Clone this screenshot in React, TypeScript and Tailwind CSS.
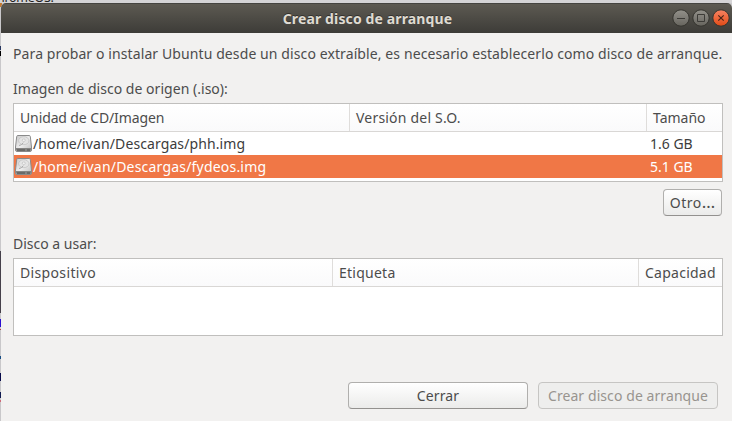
import React from "react";

function DiskIcon() {
  return (
    <svg className="block h-[17px] w-[17px] shrink-0" viewBox="0 0 17 17">
      <defs>
        <linearGradient id="disk-top" x1="0" y1="0" x2="1" y2="1">
          <stop offset="0" stopColor="#c9c9c9" />
          <stop offset="0.5" stopColor="#ededed" />
          <stop offset="1" stopColor="#bcbcbc" />
        </linearGradient>
      </defs>
      <path d="M2.8.5h11.4q1 0 1.1 1l1.2 10.5v3q0 1.5-1.5 1.5h-13Q.5 16.5.5 15v-3L1.7 1.5q.1-1 1.1-1z" fill="url(#disk-top)" stroke="#8a8a8a" />
      <path d="M1 13h15v1.8q0 1.2-1.2 1.2H2.200Q1 16 1 14.800z" fill="#858583" />
      <path d="M2 15h8M12 15h3" stroke="#50504e" />
      <ellipse cx="8.8" cy="5.7" rx="5.2" ry="4" fill="#e4e4e4" stroke="#c2c2c2" strokeWidth=".8" />
      <ellipse cx="8.8" cy="5.2" rx="1.6" ry="1.2" fill="#f8f8f8" stroke="#b4b4b4" strokeWidth=".6" />
      <path d="M4 10.500q2.500 0 4.300-2.800" fill="none" stroke="#aaa" />
    </svg>
  );
}

function WindowButton({ kind }: { kind: "min" | "max" | "close" }) {
  const close = kind === "close";
  return (
    <svg className="block h-[18px] w-[18px]" viewBox="0 0 18 18">
      <defs>
        <linearGradient id={"control-" + kind} x1="0" y1="0" x2="0" y2="1">
          <stop offset="0" stopColor={close ? "#f58363" : "#93918a"} />
          <stop offset="0.5" stopColor={close ? "#ee673c" : "#7d7b75"} />
          <stop offset="1" stopColor={close ? "#df4a16" : "#66645d"} />
        </linearGradient>
      </defs>
      <circle cx="9" cy="9" r="8.2" fill={"url(#control-" + kind + ")"} stroke="#35342f" strokeWidth="1" />
      {kind === "min" && <path d="M5 9.5h8" stroke="#3c3b37" />}
      {kind === "max" && <path d="M5.5 5.5h7v7h-7z" fill="none" stroke="#3c3b37" />}
      {close && <path d="m6.3 6.3 5.4 5.4m0-5.4-5.4 5.4" stroke="#4a2518" strokeWidth="1.2" />}
    </svg>
  );
}

const headBg = "bg-gradient-to-b from-white to-[#fafafb]";

export default function App() {
  return (
    <div className="relative h-[421px] w-[732px] overflow-hidden bg-[#c9c8ca] pl-px pt-[3px] font-['Noto_Sans',sans-serif] text-[14px] text-[#4c4c4c]">
      <div className="absolute left-0 top-0 h-[3px] w-full overflow-hidden bg-[#d5d4d6]">
        <span className="absolute -left-[3px] -top-[11px] whitespace-nowrap text-[12.5px] leading-[18px] tracking-[-0.3px] text-[#222]">hromeOS:</span>
      </div>
      <div className="absolute left-0 top-[3px] h-[4px] w-[2px] bg-[#c77b32]" />
      <div className="absolute left-0 top-[46px] h-[4px] w-px bg-[#26355f]" />
      <div className="absolute left-0 top-[51px] h-[5px] w-px bg-black" />
      <div className="absolute left-0 top-[251px] h-[62px] w-px bg-[#45404a]" />
      <div className="absolute left-0 top-[319px] h-[8px] w-px bg-[#2a0fd0]" />
      <div className="absolute left-0 top-[329px] h-px w-px bg-[#b83c4c]" />
      <div className="absolute left-0 top-[356px] h-[3px] w-px bg-[#174d85]" />
      <div className="absolute left-0 top-[373px] h-[8px] w-px bg-[#070a4a]" />
      <div className="absolute left-0 top-[392px] h-[6px] w-px bg-[#101a50]" />
      <div className="absolute left-0 top-[400px] h-[2px] w-px bg-[#d06a78]" />

      <main className="relative flex h-[418px] flex-col overflow-hidden rounded-t-[5px] bg-[#f2f1f0]">
        <header className="grid h-[30px] shrink-0 grid-cols-[1fr_auto_1fr] items-center border-t border-[#454440] bg-gradient-to-b from-[#5d5a52] to-[#3d3c38] pr-[2px]">
          <span />
          <h1 className="pl-[4px] text-[14px] font-bold leading-5 tracking-[0.13px] text-[#dfdbd2] [text-shadow:0_-1px_0_#33322e]">Crear disco de arranque</h1>
          <div className="relative -top-px flex justify-end gap-[2px]">
            <WindowButton kind="min" />
            <WindowButton kind="max" />
            <WindowButton kind="close" />
          </div>
        </header>

        <section className="flex flex-col pl-3 pr-[9px]">
          <p className="mt-[11px] h-5 whitespace-nowrap leading-5 tracking-[0.1px]">
            Para probar o instalar Ubuntu desde un disco extraíble, es necesario establecerlo como disco de arranque.
          </p>
          <p className="mt-[15px] h-5 leading-5 tracking-[0.03px]">Imagen de disco de origen (.iso):</p>

          <div className="mt-[4px] h-[79px] border border-[#c0bfbd] bg-white">
            <div className={"grid h-7 grid-cols-[336px_297px_1fr] border-b border-[#d9d7d5] leading-[27px] " + headBg}>
              <span className="border-r border-[#dfdddb] pl-[6px] tracking-[-0.12px]">Unidad de CD/Imagen</span>
              <span className="border-r border-[#dfdddb] pl-[6px] tracking-[0.2px]">Versión del S.O.</span>
              <span className="pl-[6px]">Tamaño</span>
            </div>
            <div className="flex h-[23px] items-center pl-px text-[#3c3c3c]">
              <DiskIcon />
              <span className="w-[618px] pl-px tracking-[0.1px]">/home/ivan/Descargas/phh.img</span>
              <span>1.6 GB</span>
            </div>
            <div className="flex h-[23px] items-center bg-[#f07746] pl-px text-white">
              <DiskIcon />
              <span className="w-[618px] pl-px tracking-[0.2px]">/home/ivan/Descargas/fydeos.img</span>
              <span>5.1 GB</span>
            </div>
          </div>

          <button className="mr-px mt-[7px] h-[27px] w-[59px] self-end whitespace-nowrap rounded-[4px] border border-[#b0afad] border-b-[#93918f] bg-gradient-to-b from-white to-[#ebebea] leading-[25px]"><span className="tracking-[0.5px]">Otro</span><span className="text-[17px] leading-none">…</span></button>

          <p className="mt-[18px] h-5 leading-5">Disco a usar:</p>
          <div className="mt-[4px] h-[78px] border border-[#c0bfbd] bg-white">
            <div className={"grid h-7 grid-cols-[319px_306px_1fr] border-b border-[#d9d7d5] leading-[27px] " + headBg}>
              <span className="border-r border-[#dfdddb] pl-[6px] tracking-[0.35px]">Dispositivo</span>
              <span className="border-r border-[#dfdddb] pl-[6px] tracking-[0.25px]">Etiqueta</span>
              <span className="pl-[6px] tracking-[0.25px]">Capacidad</span>
            </div>
          </div>

          <div className="mr-[5px] mt-[46px] flex justify-end gap-[10px]">
            <button className="h-[27px] w-[180px] rounded-[4px] border border-[#b0afad] border-b-[#93918f] bg-gradient-to-b from-white to-[#ebebea] leading-[25px] tracking-[0.1px]">Cerrar</button>
            <button className="h-[27px] w-[180px] rounded-[4px] border border-[#c6c5c3] bg-[#eeeeed] leading-[25px] tracking-[0.08px] text-[#98948f]">Crear disco de arranque</button>
          </div>
        </section>
      </main>
    </div>
  );
}
